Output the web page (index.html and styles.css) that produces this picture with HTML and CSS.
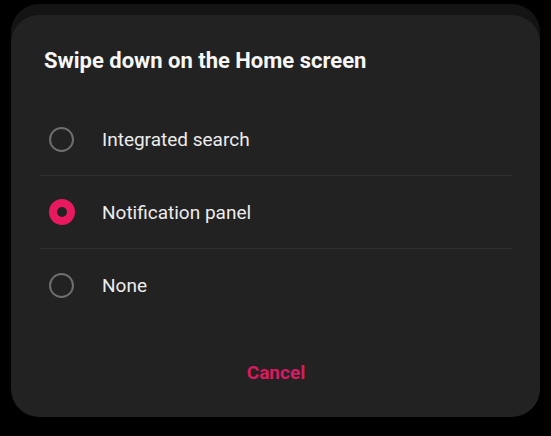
FILE: index.html
```html
<!DOCTYPE html>
<html>
<head>
<meta charset="utf-8">
<link rel="stylesheet" href="styles.css">
</head>
<body>
<div class="dialog">
  <div class="title">Swipe down on the Home screen</div>
  <div class="options">
    <div class="option">
      <span class="radio"></span>
      <span class="label">Integrated search</span>
    </div>
    <div class="option">
      <span class="radio checked"></span>
      <span class="label">Notification panel</span>
    </div>
    <div class="option">
      <span class="radio"></span>
      <span class="label">None</span>
    </div>
  </div>
  <div class="actions">
    <span class="cancel">Cancel</span>
  </div>
</div>
</body>
</html>
```
FILE: styles.css
```css
html, body {
  margin: 0;
  padding: 0;
  background: #000;
}
body {
  width: 551px;
  height: 436px;
  overflow: hidden;
  font-family: Roboto, "Noto Sans", sans-serif;
}
.dialog {
  margin: 15px 11px 0 11px;
  height: 402px;
  box-sizing: border-box;
  background: #222222;
  border-radius: 28px;
  box-shadow: 0 -11px 0 0 #141414;
  padding: 0 28px 0 29px;
  display: flex;
  flex-direction: column;
}
.title {
  margin-top: 32px;
  padding-left: 4px;
  font-size: 22px;
  font-weight: 700;
  line-height: 28px;
  color: #f7f7f7;
}
.options {
  margin-top: 28px;
  display: flex;
  flex-direction: column;
}
.option {
  height: 72px;
  display: flex;
  align-items: center;
  padding-left: 9px;
}
.option + .option {
  border-top: 1px solid #2f2f2f;
}
.radio {
  width: 25px;
  height: 25px;
  box-sizing: border-box;
  border-radius: 50%;
  border: 2px solid #6e6e6e;
  flex: none;
}
.radio.checked {
  width: 26px;
  height: 26px;
  border: 8px solid #e8195f;
}
.label {
  margin-left: 28px;
  font-size: 19px;
  color: #ececec;
}
.option:nth-child(2) .label {
  margin-left: 27px;
}
.actions {
  flex: 1;
  display: flex;
  justify-content: center;
  align-items: flex-start;
  padding-top: 40px;
}
.cancel {
  font-size: 19px;
  font-weight: 700;
  color: #d81b60;
  line-height: 24px;
}
```
